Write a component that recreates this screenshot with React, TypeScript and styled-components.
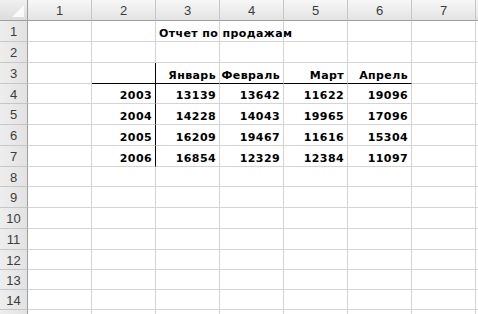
import * as React from 'react';
import styled, { createGlobalStyle } from 'styled-components';

const GlobalStyle = createGlobalStyle`
  html, body {
    margin: 0;
    padding: 0;
    background: #ffffff;
  }
`;

const Sheet = styled.div`
  width: 478px;
  height: 314px;
  overflow: hidden;
  background: #ffffff;
  display: flex;
  flex-direction: column;
`;

const Row = styled.div<{ $height: number }>`
  display: flex;
  flex: none;
  height: ${p => p.$height}px;
`;

const Corner = styled.div`
  position: relative;
  flex: none;
  box-sizing: border-box;
  width: 28px;
  height: 100%;
  background: linear-gradient(#f0f0f0, #dcdcdc);
  border-right: 1px solid #9e9e9e;
  border-bottom: 1px solid #9e9e9e;

  &::after {
    content: '';
    position: absolute;
    right: 3px;
    bottom: 3px;
    width: 0;
    height: 0;
    border-left: 12px solid transparent;
    border-bottom: 12px solid #fafafa;
  }
`;

const ColHead = styled.div`
  flex: none;
  box-sizing: border-box;
  width: 64px;
  height: 100%;
  display: flex;
  align-items: center;
  justify-content: center;
  background: linear-gradient(#f7f7f7, #e3e3e3);
  border-right: 1px solid #c6c6c6;
  border-bottom: 1px solid #9e9e9e;
  font: 13px 'Liberation Sans', Arial, sans-serif;
  color: #3c3c3c;
`;

const RowHead = styled.div`
  flex: none;
  box-sizing: border-box;
  width: 28px;
  height: 100%;
  display: flex;
  align-items: center;
  justify-content: center;
  padding-top: 1px;
  background: linear-gradient(90deg, #eeeeee, #e2e2e2);
  border-right: 1px solid #9e9e9e;
  border-bottom: 1px solid #c6c6c6;
  font: 13px 'Liberation Sans', Arial, sans-serif;
  color: #3c3c3c;
`;

const Cell = styled.div<{ $right?: boolean; $thickBottom?: boolean; $thickRight?: boolean }>`
  flex: none;
  box-sizing: border-box;
  width: 64px;
  height: 100%;
  display: flex;
  align-items: flex-end;
  justify-content: ${p => (p.$right ? 'flex-end' : 'flex-start')};
  padding: 0 3px 1px 3px;
  white-space: nowrap;
  border-right: 1px solid ${p => (p.$thickRight ? '#000000' : '#d4d4d4')};
  border-bottom: 1px solid ${p => (p.$thickBottom ? '#000000' : '#d4d4d4')};
  font: bold 11px/12px 'DejaVu Sans', Verdana, sans-serif;
  letter-spacing: 0.4px;
  color: #000000;
`;

const COLS = [1, 2, 3, 4, 5, 6, 7, 8];
const ROW_HEIGHTS = [21, 21, 21, 20, 21, 21, 21, 20, 21, 21, 21, 20, 20, 20, 21];
// only the first 14 columns/rows are fully on screen
const lastVisibleCol = 7;
const lastVisibleRow = 14;

const months = ['Январь', 'Февраль', 'Март', 'Апрель'];
const sales: [string, string[]][] = [
  ['2003', ['13139', '13642', '11622', '19096']],
  ['2004', ['14228', '14043', '19965', '17096']],
  ['2005', ['16209', '19467', '11616', '15304']],
  ['2006', ['16854', '12329', '12384', '11097']]
];

const cellAt = (row: number, col: number): { text?: string; right?: boolean } => {
  if (row === 1 && col === 3) return { text: 'Отчет по продажам' };
  if (row === 3 && col >= 3 && col <= 6) return { text: months[col - 3], right: true };
  if (row >= 4 && row <= 7) {
    const [year, values] = sales[row - 4];
    if (col === 2) return { text: year, right: true };
    if (col >= 3 && col <= 6) return { text: values[col - 3], right: true };
  }
  return {};
};

const App: React.FC = () => (
  <Sheet>
    <GlobalStyle />
    <Row $height={21}>
      <Corner />
      {COLS.map(c => (
        <ColHead key={c}>{c <= lastVisibleCol ? c : ''}</ColHead>
      ))}
    </Row>
    {ROW_HEIGHTS.map((h, i) => {
      const row = i + 1;
      return (
        <Row $height={h} key={row}>
          <RowHead>{row <= lastVisibleRow ? row : ''}</RowHead>
          {COLS.map(col => {
            const { text, right } = cellAt(row, col);
            return (
              <Cell
                key={col}
                $right={right}
                $thickBottom={row === 3 && col >= 2 && col <= 6}
                $thickRight={col === 2 && row >= 3 && row <= 7}
              >
                {text}
              </Cell>
            );
          })}
        </Row>
      );
    })}
  </Sheet>
);

export default App;
